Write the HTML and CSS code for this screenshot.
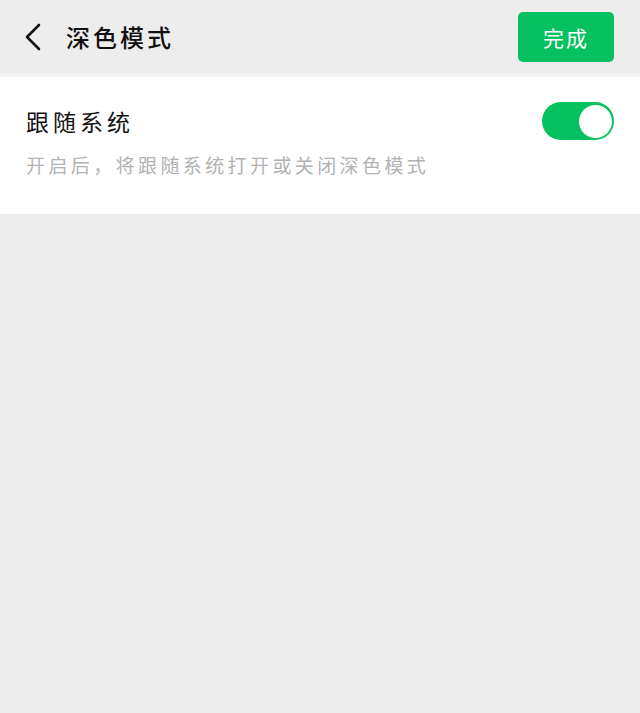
FILE: index.html
```html
<!DOCTYPE html>
<html lang="zh-CN">

<head>
  <meta charset="UTF-8">
  <meta name="viewport" content="width=device-width, initial-scale=1.0">
  <title>深色模式</title>
  <link rel="stylesheet" href="styles.css">
</head>

<body>
  <header class="top-bar">
    <div class="top-left">
      <svg class="back-icon" width="18" height="28" viewBox="0 0 18 28">
        <path d="M15 2 L3 14 L15 26" fill="none" stroke="#111" stroke-width="2.6" stroke-linecap="round"
          stroke-linejoin="round" />
      </svg>
      <h1 class="page-title">深色模式</h1>
    </div>
    <button class="done-btn">完成</button>
  </header>

  <section class="setting-card">
    <div class="setting-row">
      <div class="setting-name">跟随系统</div>
      <div class="switch on">
        <div class="knob"></div>
      </div>
    </div>
    <p class="setting-desc">开启后，将跟随系统打开或关闭深色模式</p>
  </section>
</body>

</html>
```

FILE: styles.css
```css
* {
  margin: 0;
  padding: 0;
  box-sizing: border-box;
}

body {
  font-family: "Noto Sans CJK SC", "Noto Sans", sans-serif;
  background-color: #ededed;
  color: #111;
  height: 100vh;
}

.top-bar {
  height: 77px;
  padding: 0 26px 0 24px;
  display: flex;
  align-items: center;
  justify-content: space-between;
  background-color: #ededed;
  border-bottom: 3px solid #f4f4f4;
}

.top-left {
  display: flex;
  align-items: center;
  gap: 24px;
}

.back-icon {
  display: block;
}

.page-title {
  font-size: 24px;
  font-weight: 500;
  letter-spacing: 3px;
  line-height: 1;
}

.done-btn {
  width: 96px;
  height: 50px;
  border: none;
  border-radius: 5px;
  background-color: #07c160;
  color: #fff;
  font-family: inherit;
  font-size: 21px;
  letter-spacing: 2px;
  cursor: pointer;
}

.setting-card {
  background-color: #fff;
  padding: 25px 26px 36px 26px;
}

.setting-row {
  display: flex;
  align-items: center;
  justify-content: space-between;
}

.setting-name {
  font-size: 23px;
  letter-spacing: 4px;
  line-height: 38px;
}

.switch {
  width: 72px;
  height: 38px;
  border-radius: 19px;
  background-color: #07c160;
  padding: 2.5px;
  display: flex;
  justify-content: flex-end;
}

.knob {
  width: 33px;
  height: 33px;
  border-radius: 50%;
  background-color: #fff;
}

.setting-desc {
  margin-top: 12px;
  font-size: 19px;
  letter-spacing: 3.4px;
  color: #b2b2b2;
  line-height: 26px;
}
```
